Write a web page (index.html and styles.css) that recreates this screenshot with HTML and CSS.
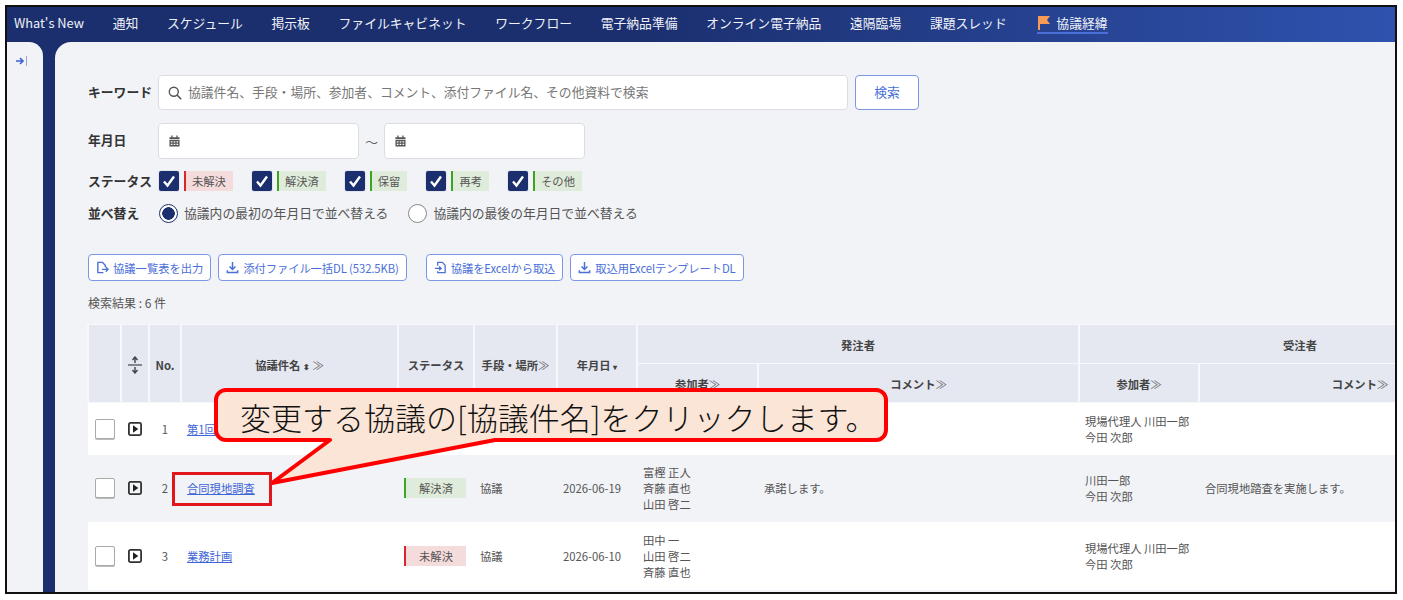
FILE: index.html
```html
<!DOCTYPE html>
<html lang="ja">
<head>
    <meta charset="UTF-8">
    <title>協議経緯</title>
    <link rel="stylesheet" href="styles.css">
</head>
<body>
    <div class="frame">
        <nav class="nav">
            <a>What's New</a>
            <a>通知</a>
            <a>スケジュール</a>
            <a>掲示板</a>
            <a>ファイルキャビネット</a>
            <a>ワークフロー</a>
            <a>電子納品準備</a>
            <a>オンライン電子納品</a>
            <a>遠隔臨場</a>
            <a>課題スレッド</a>
            <a class="nav-active">
                <svg class="flag" viewBox="0 0 14 14"><path d="M1 0h12l-3 4 3 4H3v6H1z" fill="#f79a55"/></svg>
                <span>協議経緯</span>
            </a>
        </nav>
        <div class="content">
            <aside class="side">
                <svg class="side-icon" viewBox="0 0 12 10"><path d="M0 5h6.5M4 2l3 3-3 3" fill="none" stroke="#3f5fd8" stroke-width="1.6"/><path d="M10.5 0v10" stroke="#9aa4c4" stroke-width="1"/></svg>
            </aside>
            <main class="main">
                <div class="row row-keyword">
                    <span class="label">キーワード</span>
                    <div class="input input-keyword">
                        <svg class="icon-search" viewBox="0 0 14 14"><circle cx="5.8" cy="5.8" r="4.5" fill="none" stroke="#555" stroke-width="1.4"/><path d="M9 9l4.2 4.2" stroke="#555" stroke-width="1.6"/></svg>
                        <span class="placeholder">協議件名、手段・場所、参加者、コメント、添付ファイル名、その他資料で検索</span>
                    </div>
                    <button class="btn btn-search">検索</button>
                </div>
                <div class="row row-date">
                    <span class="label">年月日</span>
                    <div class="input input-date">
                        <svg class="icon-cal" viewBox="0 0 12 12"><path d="M2.5 0h1.4v2H8V0h1.4v2H11.5v2H.5V2h2zM.5 5h11v7H.5zM2 6.2v1.4h1.8V6.2zm3.1 0v1.4h1.8V6.2zm3.1 0v1.4H10V6.2zM2 9v1.4h1.8V9zm3.1 0v1.4h1.8V9zm3.1 0v1.4H10V9z" fill="#555" fill-rule="evenodd"/></svg>
                    </div>
                    <span class="tilde">～</span>
                    <div class="input input-date">
                        <svg class="icon-cal" viewBox="0 0 12 12"><path d="M2.5 0h1.4v2H8V0h1.4v2H11.5v2H.5V2h2zM.5 5h11v7H.5zM2 6.2v1.4h1.8V6.2zm3.1 0v1.4h1.8V6.2zm3.1 0v1.4H10V6.2zM2 9v1.4h1.8V9zm3.1 0v1.4h1.8V9zm3.1 0v1.4H10V9z" fill="#555" fill-rule="evenodd"/></svg>
                    </div>
                </div>
                <div class="row row-status">
                    <span class="label">ステータス</span>
                    <div class="status-list">
                        <div class="status-item">
                            <span class="check"><svg viewBox="0 0 20 20"><path d="M5 10.5l3.5 4L15 5.5" fill="none" stroke="#fff" stroke-width="2.4"/></svg></span>
                            <span class="tag tag-red">未解決</span>
                        </div>
                        <div class="status-item">
                            <span class="check"><svg viewBox="0 0 20 20"><path d="M5 10.5l3.5 4L15 5.5" fill="none" stroke="#fff" stroke-width="2.4"/></svg></span>
                            <span class="tag tag-green">解決済</span>
                        </div>
                        <div class="status-item">
                            <span class="check"><svg viewBox="0 0 20 20"><path d="M5 10.5l3.5 4L15 5.5" fill="none" stroke="#fff" stroke-width="2.4"/></svg></span>
                            <span class="tag tag-green">保留</span>
                        </div>
                        <div class="status-item">
                            <span class="check"><svg viewBox="0 0 20 20"><path d="M5 10.5l3.5 4L15 5.5" fill="none" stroke="#fff" stroke-width="2.4"/></svg></span>
                            <span class="tag tag-green">再考</span>
                        </div>
                        <div class="status-item">
                            <span class="check"><svg viewBox="0 0 20 20"><path d="M5 10.5l3.5 4L15 5.5" fill="none" stroke="#fff" stroke-width="2.4"/></svg></span>
                            <span class="tag tag-green">その他</span>
                        </div>
                    </div>
                </div>
                <div class="row row-sort">
                    <span class="label label-sort">並べ替え</span>
                    <span class="radio radio-on"></span>
                    <span class="radio-text">協議内の最初の年月日で並べ替える</span>
                    <span class="radio"></span>
                    <span class="radio-text">協議内の最後の年月日で並べ替える</span>
                </div>
                <div class="actions">
                    <button class="btn btn-action">
                        <svg viewBox="0 0 14 14"><path d="M8 12.5H2V1.500h5l3 3v2" fill="none" stroke="#4a6fd9" stroke-width="1.5"/><path d="M6.500 9h6.500M10.500 6.500L13 9l-2.500 2.500" fill="none" stroke="#4a6fd9" stroke-width="1.4"/></svg>
                        協議一覧表を出力
                    </button>
                    <button class="btn btn-action btn-narrow">
                        <svg viewBox="0 0 14 14"><path d="M7 1v8M3.800 6L7 9.200 10.200 6" fill="none" stroke="#4a6fd9" stroke-width="1.6"/><path d="M1.500 10v2.500h11V10" fill="none" stroke="#4a6fd9" stroke-width="1.6"/></svg>
                        添付ファイル一括DL (532.5KB)
                    </button>
                    <button class="btn btn-action btn-narrow btn-gap">
                        <svg viewBox="0 0 14 14"><path d="M4 5V1.500h5l3 3v8H4V11" fill="none" stroke="#4a6fd9" stroke-width="1.4"/><path d="M1 8h6.500M5.500 6l2.200 2-2.200 2" fill="none" stroke="#4a6fd9" stroke-width="1.4"/></svg>
                        協議をExcelから取込
                    </button>
                    <button class="btn btn-action btn-narrow">
                        <svg viewBox="0 0 14 14"><path d="M7 1v8M3.800 6L7 9.200 10.200 6" fill="none" stroke="#4a6fd9" stroke-width="1.6"/><path d="M1.500 10v2.500h11V10" fill="none" stroke="#4a6fd9" stroke-width="1.6"/></svg>
                        取込用ExcelテンプレートDL
                    </button>
                </div>
                <p class="result-count">検索結果 : 6 件</p>
                <table class="list">
                    <colgroup>
                        <col style="width:33px"><col style="width:28px"><col style="width:32px"><col style="width:217px">
                        <col style="width:76px"><col style="width:83px"><col style="width:80px">
                        <col style="width:121px"><col style="width:321px"><col style="width:120px"><col style="width:322px">
                    </colgroup>
                    <thead>
                        <tr class="head-top">
                            <th rowspan="2"></th>
                            <th rowspan="2">
                                <svg class="icon-expand" viewBox="0 0 14 18"><path d="M0 9h14" stroke="#444" stroke-width="1.2"/><path d="M7 7V2M4.500 4L7 1l2.500 3M7 11v5M4.500 14L7 17l2.500-3" fill="none" stroke="#444" stroke-width="1.4"/></svg>
                            </th>
                            <th rowspan="2">No.</th>
                            <th rowspan="2">協議件名 <span class="sort">⬍</span> <span class="more">≫</span></th>
                            <th rowspan="2">ステータス</th>
                            <th rowspan="2">手段・場所<span class="more">≫</span></th>
                            <th rowspan="2">年月日 <span class="sort">▾</span></th>
                            <th colspan="2">発注者</th>
                            <th colspan="2">受注者</th>
                        </tr>
                        <tr class="head-sub">
                            <th>参加者<span class="more">≫</span></th>
                            <th>コメント<span class="more">≫</span></th>
                            <th>参加者<span class="more">≫</span></th>
                            <th>コメント<span class="more">≫</span></th>
                        </tr>
                    </thead>
                    <tbody>
                        <tr class="row-a">
                            <td class="center"><span class="row-check"></span></td>
                            <td class="center"><svg class="icon-play" viewBox="0 0 14 14"><rect x=".9" y=".9" width="12.200" height="12.200" rx="1.500" fill="none" stroke="#333" stroke-width="1.800"/><path d="M5 3.200L10.300 7 5 10.800z" fill="#222"/></svg></td>
                            <td class="center">1</td>
                            <td class="name"><a href="#">第1回</a></td>
                            <td></td>
                            <td></td>
                            <td></td>
                            <td></td>
                            <td></td>
                            <td>現場代理人 川田一郎<br>今田 次郎</td>
                            <td></td>
                        </tr>
                        <tr class="row-b">
                            <td class="center"><span class="row-check"></span></td>
                            <td class="center"><svg class="icon-play" viewBox="0 0 14 14"><rect x=".9" y=".9" width="12.200" height="12.200" rx="1.500" fill="none" stroke="#333" stroke-width="1.800"/><path d="M5 3.200L10.300 7 5 10.800z" fill="#222"/></svg></td>
                            <td class="center">2</td>
                            <td class="name"><a href="#">合同現地調査</a></td>
                            <td class="cell-tag"><span class="tag tag-green">解決済</span></td>
                            <td>協議</td>
                            <td>2026-06-19</td>
                            <td>富樫 正人<br>斉藤 直也<br>山田 啓二</td>
                            <td>承諾します。</td>
                            <td>川田一郎<br>今田 次郎</td>
                            <td>合同現地踏査を実施します。</td>
                        </tr>
                        <tr class="row-c">
                            <td class="center"><span class="row-check"></span></td>
                            <td class="center"><svg class="icon-play" viewBox="0 0 14 14"><rect x=".9" y=".9" width="12.200" height="12.200" rx="1.500" fill="none" stroke="#333" stroke-width="1.800"/><path d="M5 3.200L10.300 7 5 10.800z" fill="#222"/></svg></td>
                            <td class="center">3</td>
                            <td class="name"><a href="#">業務計画</a></td>
                            <td class="cell-tag"><span class="tag tag-red">未解決</span></td>
                            <td>協議</td>
                            <td>2026-06-10</td>
                            <td>田中 一<br>山田 啓二<br>斉藤 直也</td>
                            <td></td>
                            <td>現場代理人 川田一郎<br>今田 次郎</td>
                            <td></td>
                        </tr>
                    </tbody>
                </table>
            </main>
        </div>

        <!-- annotation drawn over the screen -->
        <svg class="callout-shape" viewBox="0 0 740 120">
            <path d="M23 2H673a10 10 0 0 1 10 10V42a10 10 0 0 1-10 10H292L69 95 127 52H23a10 10 0 0 1-10-10V12A10 10 0 0 1 23 2Z" fill="#fbe5d6" stroke="#f00" stroke-width="4" stroke-linejoin="round"/>
        </svg>
        <div class="callout-text">変更する協議の[協議件名]をクリックします。</div>
        <div class="callout-mark"></div>
    </div>
</body>
</html>
```

FILE: styles.css
```css
* {
    box-sizing: border-box;
}
html, body {
    margin: 0;
    background: #fff;
}
body {
    height: 600px;
    overflow: hidden;
    padding: 5px 0 0 5px;
    font-family: "Noto Sans CJK JP", "Noto Sans", sans-serif;
    font-size: 11.3px;
    color: #444;
}
.frame {
    position: relative;
    display: flex;
    flex-direction: column;
    width: 1392px;
    height: 589px;
    border: 2px solid #111;
    overflow: hidden;
}

/* top navigation */
.nav {
    display: flex;
    align-items: center;
    gap: 28.7px;
    height: 35px;
    flex: none;
    padding: 0 0 4px 7px;
    font-size: 12.8px;
    color: #f0f2f8;
    background: linear-gradient(90deg, #1b2f6e 0%, #1b2f6e 45%, #2f52ae 100%);
}
.nav a {
    white-space: nowrap;
}
.nav-active {
    display: flex;
    align-items: center;
    gap: 5px;
    height: 23px;
    padding-top: 2px;
    margin-left: 2px;
    border-bottom: 2px solid #4a6fd9;
}
.flag {
    width: 14px;
    height: 14px;
}

/* body area */
.content {
    flex: 1;
    display: flex;
    min-height: 0;
    background: #1b2f6e;
}
.side {
    flex: none;
    width: 36px;
    border-top-right-radius: 14px;
    background: #f2f3f7;
}
.side-icon {
    display: block;
    width: 12px;
    height: 10px;
    margin: 14px 0 0 9px;
}
.main {
    flex: 1;
    min-width: 0;
    margin-left: 12px;
    padding: 33px 0 0 33px;
    border-top-left-radius: 16px;
    background: #f2f3f7;
    overflow: hidden;
}

/* search form */
.row {
    display: flex;
    align-items: center;
}
.label {
    flex: none;
    width: 70px;
    margin-bottom: 3px;
    font-size: 12.8px;
    font-weight: 700;
    color: #333;
}
.input {
    display: flex;
    align-items: center;
    background: #fff;
    border: 1px solid #dcdde2;
    border-radius: 4px;
}
.row-keyword {
    height: 35px;
}
.input-keyword {
    width: 690px;
    height: 35px;
    padding-left: 9px;
}
.icon-search {
    width: 14px;
    height: 14px;
    margin-right: 6px;
}
.placeholder {
    margin-bottom: 3px;
    font-size: 12.8px;
    color: #777;
}
.btn {
    display: inline-flex;
    align-items: center;
    justify-content: center;
    font: inherit;
    color: #4a6fd9;
    background: #fff;
    border: 1px solid #7d97e6;
    border-radius: 4px;
    padding: 0;
}
.btn-search {
    width: 64px;
    height: 35px;
    margin-left: 7px;
    padding-bottom: 3px;
    font-size: 12.8px;
}
.row-date {
    height: 36px;
    margin-top: 13px;
}
.input-date {
    width: 201px;
    height: 36px;
    padding-left: 10px;
}
.icon-cal {
    width: 11px;
    height: 12px;
}
.tilde {
    width: 25px;
    text-align: center;
    font-size: 13px;
    color: #666;
}
.row-status {
    height: 22px;
    margin-top: 11px;
}
.row-status .label {
    margin-bottom: 2px;
}
.status-list {
    display: flex;
    gap: 19px;
    margin-left: 1px;
}
.status-item {
    display: flex;
    align-items: center;
    gap: 5px;
}
.check {
    width: 20px;
    height: 20px;
    border-radius: 2px;
    background: #1b2f6e;
    box-shadow: 0 0 0 1px #e4e6ee;
}
.check svg {
    display: block;
}
.tag {
    display: inline-block;
    height: 20px;
    padding: 0 7px 0 6px;
    line-height: 20px;
    white-space: nowrap;
    color: #555;
    border-left: 2px solid;
}
.tag-red {
    background: #f5dcdc;
    border-left-color: #d9262c;
}
.tag-green {
    background: #e0ecdb;
    border-left-color: #3aa51d;
}
.row-sort {
    height: 22px;
    margin-top: 10px;
    font-size: 12.8px;
}
.label-sort {
    width: 71px;
    margin-bottom: 2px;
}
.radio {
    flex: none;
    width: 19px;
    height: 19px;
    border: 1px solid #888;
    border-radius: 50%;
    background: #fff;
}
.radio-on {
    border-color: #1b2f6e;
    background: radial-gradient(circle, #1b2f6e 0 6px, #fff 6.500px);
}
.radio-text {
    margin: 0 20px 2px 6px;
    color: #555;
}

/* action buttons */
.actions {
    display: flex;
    gap: 7px;
    margin-top: 30px;
}
.btn-action {
    height: 27px;
    padding: 0 7px;
    gap: 4px;
    white-space: nowrap;
}
.btn-action svg {
    width: 13px;
    height: 13px;
}
.btn-narrow {
    letter-spacing: -0.1px;
}
.btn-gap {
    margin-left: 12px;
}
.result-count {
    margin: 13px 0 0;
    height: 18px;
    line-height: 18px;
    font-size: 12px;
    color: #555;
}

/* list table */
.list {
    width: 1433px;
    margin: 12px 0 0 -1px;
    table-layout: fixed;
    border-collapse: collapse;
}
.list th {
    padding: 2px 0 0;
    font-weight: 700;
    color: #444;
    background: #e5e8f1;
    border: 2px solid #f7f8fb;
    border-top-width: 1px;
    border-bottom-width: 1px;
}
.head-top {
    height: 39px;
}
.head-sub {
    height: 39px;
}
.more {
    font-weight: 400;
    color: #666;
}
.sort {
    font-size: 8px;
}
.icon-expand {
    display: block;
    width: 14px;
    height: 18px;
    margin: 0 auto;
}
.list td {
    padding: 0 6px;
    line-height: 16px;
    color: #555;
}
.list td.center {
    padding: 0;
    text-align: center;
}
.row-a {
    height: 52px;
    background: #fff;
}
.row-b {
    height: 67px;
    background: #f2f3f7;
}
.row-c {
    height: 68px;
    background: #fff;
}
.row-check {
    display: block;
    width: 20px;
    height: 20px;
    margin: 0 0 0 7px;
    background: #fff;
    border: 1px solid #aaa;
    border-radius: 2px;
    box-shadow: 0 1px 0 #bbb;
}
.icon-play {
    display: block;
    width: 14px;
    height: 14px;
    margin: 0 auto;
}
.list td.name a {
    color: #3f66d6;
}
.list td.cell-tag {
    padding: 0 0 0 6px;
}
.cell-tag .tag {
    display: block;
    width: 62px;
    padding: 0;
    text-align: center;
}

/* annotation */
.callout-shape {
    position: absolute;
    left: 196px;
    top: 381px;
    width: 740px;
    height: 120px;
}
.callout-text {
    position: absolute;
    left: 233px;
    top: 390px;
    font-weight: 300;
    font-size: 31px;
    line-height: 40px;
    white-space: nowrap;
    color: #111;
}
.callout-mark {
    position: absolute;
    left: 165px;
    top: 465px;
    width: 100px;
    height: 34px;
    border: 3px solid #e0161c;
}
```
